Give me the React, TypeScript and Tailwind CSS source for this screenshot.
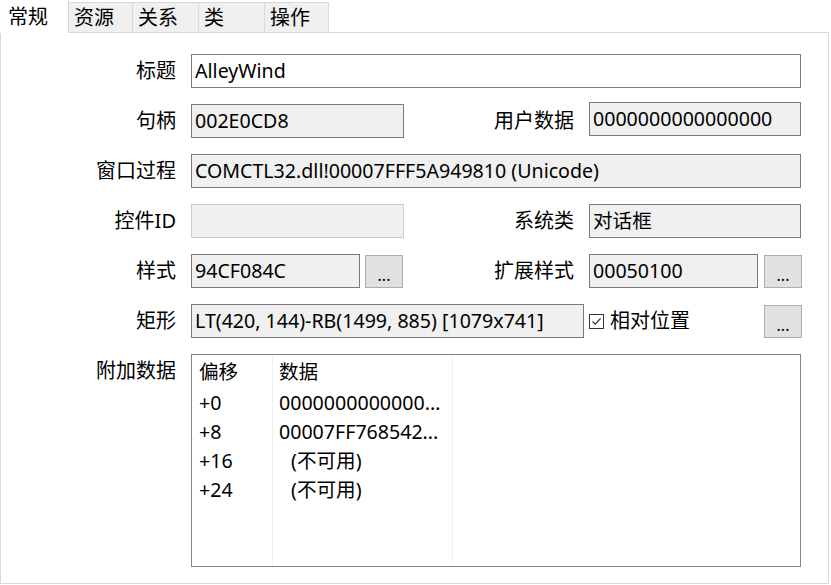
import React from 'react';

const font = "font-['Noto_Sans','Noto_Sans_CJK_SC',sans-serif]";

const tabs = ['常规', '资源', '关系', '类', '操作'];

function Label({ children, w }: { children: React.ReactNode; w: string }) {
  return <div className={`${w} shrink-0 text-right pr-[15px] leading-[34px]`}>{children}</div>;
}

function Field({ value, w, disabled, white }: { value?: string; w: string; disabled?: boolean; white?: boolean }) {
  return (
    <div
      className={`${w} h-[34px] shrink-0 border px-[3px] text-[19.6px] leading-[32px] whitespace-nowrap overflow-hidden ${
        disabled ? 'border-[#cccccc] bg-[#f0f0f0]' : white ? 'border-[#7a7a7a] bg-white' : 'border-[#7a7a7a] bg-[#f0f0f0]'
      }`}
    >
      {value}
    </div>
  );
}

function MoreButton() {
  return (
    <div className="w-[38px] h-[33px] shrink-0 border border-[#adadad] bg-[#e1e1e1] flex items-center justify-center text-[16px] leading-none pt-[6px]">
      ...
    </div>
  );
}

const rows = [
  { off: '+0', data: '0000000000000...', indent: false },
  { off: '+8', data: '00007FF768542...', indent: false },
  { off: '+16', data: '(不可用)', indent: true },
  { off: '+24', data: '(不可用)', indent: true },
];

export default function App() {
  return (
    <div className={`w-[831px] h-[585px] bg-white text-black text-[20px] ${font} overflow-hidden`}>
      {/* Tab strip */}
      <div className="flex h-[33px] items-end">
        {tabs.map((t, i) =>
          i === 0 ? (
            <div key={t} className="w-[69px] h-[33px] bg-white border-r border-[#d9d9d9] pl-[8px] leading-[34px] relative z-10">
              {t}
            </div>
          ) : (
            <div
              key={t}
              className={`h-[31px] bg-[#f0f0f0] border-t border-r border-b border-[#d9d9d9] pl-[5px] leading-[30px] ${
                i === 1 ? 'w-[64px]' : i === 4 ? 'w-[64px]' : 'w-[66px]'
              }`}
            >
              {t}
            </div>
          )
        )}
      </div>

      {/* Panel */}
      <div className="w-[829px] h-[552px] -mt-px border border-[#d9d9d9] bg-white pt-[21px] flex flex-col gap-[16px]">
        <div className="flex">
          <Label w="w-[190px]">标题</Label>
          <Field w="w-[610px]" value="AlleyWind" white />
        </div>

        <div className="flex items-start">
          <Label w="w-[190px]">句柄</Label>
          <Field w="w-[213px]" value="002E0CD8" />
          <Label w="w-[185px]">用户数据</Label>
          <div className="-mt-[2px]">
            <Field w="w-[212px]" value="0000000000000000" />
          </div>
        </div>

        <div className="flex">
          <Label w="w-[190px]">窗口过程</Label>
          <Field w="w-[610px]" value="COMCTL32.dll!00007FFF5A949810 (Unicode)" />
        </div>

        <div className="flex">
          <Label w="w-[190px]">控件ID</Label>
          <Field w="w-[213px]" disabled />
          <Label w="w-[185px]">系统类</Label>
          <Field w="w-[212px]" value="对话框" />
        </div>

        <div className="flex items-start">
          <Label w="w-[190px]">样式</Label>
          <Field w="w-[169px]" value="94CF084C" />
          <div className="ml-[5px] mt-px">
            <MoreButton />
          </div>
          <Label w="w-[186px]">扩展样式</Label>
          <Field w="w-[169px]" value="00050100" />
          <div className="ml-[6px] mt-px">
            <MoreButton />
          </div>
        </div>

        <div className="flex items-start">
          <Label w="w-[190px]">矩形</Label>
          <Field w="w-[393px]" value="LT(420, 144)-RB(1499, 885) [1079x741]" />
          <div className="ml-[5px] w-[175px] h-[34px] flex items-center">
            <div className="w-[15px] h-[15px] border border-[#333333] bg-white flex items-center justify-center">
              <svg width="11" height="11" viewBox="0 0 11 11">
                <path d="M1.5 5.5 L4.2 8.2 L9.5 2.5" fill="none" stroke="#333333" strokeWidth="1.2" />
              </svg>
            </div>
            <span className="ml-[6px]">相对位置</span>
          </div>
          <div className="mt-px">
            <MoreButton />
          </div>
        </div>

        <div className="flex items-start">
          <Label w="w-[190px]">附加数据</Label>
          <div className="w-[610px] h-[213px] border border-[#828790] bg-white flex text-[19.6px]">
            <div className="w-[81px] border-r border-[#f0f0f0] pl-[7px] flex flex-col">
              <div className="h-[33px] leading-[34px]">偏移</div>
              {rows.map((r) => (
                <div key={r.off} className="h-[29px] leading-[29px]">
                  {r.off}
                </div>
              ))}
            </div>
            <div className="w-[180px] border-r border-[#f0f0f0] pl-[6px] flex flex-col whitespace-nowrap">
              <div className="h-[33px] leading-[34px]">数据</div>
              {rows.map((r) => (
                <div key={r.off} className={`h-[29px] leading-[29px] ${r.indent ? 'pl-[12px]' : ''}`}>
                  {r.data}
                </div>
              ))}
            </div>
          </div>
        </div>
      </div>
    </div>
  );
}
